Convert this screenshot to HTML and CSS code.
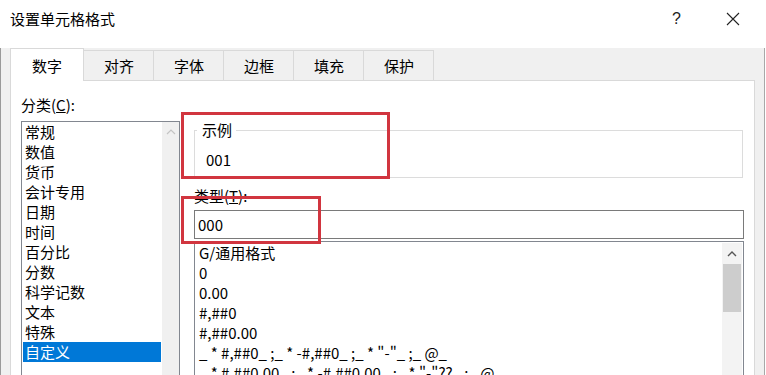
FILE: index.html
```html
<!DOCTYPE html>
<html lang="zh-CN">
<head>
    <meta charset="UTF-8">
    <meta name="viewport" content="width=device-width, initial-scale=1.0">
    <title>设置单元格格式</title>
    <link rel="stylesheet" href="styles.css">
</head>
<body>
    <div id="dialog">
        <div class="titlebar">
            <span class="title">设置单元格格式</span>
            <span class="help">?</span>
            <span class="close">
                <svg width="14" height="14" viewBox="0 0 14 14">
                    <path d="M1 1 L13 13 M13 1 L1 13" stroke="#222" stroke-width="1.1" fill="none"/>
                </svg>
            </span>
        </div>

        <div class="client">
            <div class="tabs">
                <div class="tab active">数字</div>
                <div class="tab">对齐</div>
                <div class="tab">字体</div>
                <div class="tab">边框</div>
                <div class="tab">填充</div>
                <div class="tab">保护</div>
            </div>

            <div class="panel">
                <div class="category">
                    <div class="label">分类(<u>C</u>):</div>
                    <div class="listbox categoryList">
                        <ul class="items">
                            <li>常规</li>
                            <li>数值</li>
                            <li>货币</li>
                            <li>会计专用</li>
                            <li>日期</li>
                            <li>时间</li>
                            <li>百分比</li>
                            <li>分数</li>
                            <li>科学记数</li>
                            <li>文本</li>
                            <li>特殊</li>
                            <li class="selected">自定义</li>
                        </ul>
                        <div class="vscroll">
                            <svg class="arrow" width="10" height="6" viewBox="0 0 10 6">
                                <path d="M1 5 L5 1 L9 5" stroke="#c4c4c4" stroke-width="1.2" fill="none"/>
                            </svg>
                        </div>
                    </div>
                </div>

                <div class="format">
                    <fieldset class="sample">
                        <legend>示例</legend>
                        <div class="sampleValue">001</div>
                    </fieldset>

                    <div class="label typeLabel">类型(<u>T</u>):</div>
                    <div class="typeInput">000</div>

                    <div class="listbox typeList">
                        <ul class="items">
                            <li>G/通用格式</li>
                            <li>0</li>
                            <li>0.00</li>
                            <li>#,##0</li>
                            <li>#,##0.00</li>
                            <li>_ * #,##0_ ;_ * -#,##0_ ;_ * "-"_ ;_ @_</li>
                            <li>_ * #,##0.00_ ;_ * -#,##0.00_ ;_ * "-"??_ ;_ @_</li>
                            <li>#,##0;-#,##0</li>
                        </ul>
                        <div class="vscroll">
                            <svg class="arrow" width="10" height="6" viewBox="0 0 10 6">
                                <path d="M1 5 L5 1 L9 5" stroke="#555" stroke-width="1.4" fill="none"/>
                            </svg>
                            <div class="thumb"></div>
                        </div>
                    </div>
                </div>
            </div>
        </div>

        <!-- red highlight boxes drawn over the dialog -->
        <div class="mark markSample"></div>
        <div class="mark markType"></div>
    </div>
</body>
</html>
```

FILE: styles.css
```css
body {
    margin: 0;
    background-color: white;
    font-family: "Noto Sans CJK SC", "Microsoft YaHei", sans-serif;
    font-size: 15px;
    color: #000;
}

#dialog {
    position: relative;
    width: 766px;
    height: 375px;
    overflow: hidden;
}

.titlebar {
    display: flex;
    align-items: center;
    height: 38px;
    padding-left: 10px;
    background-color: white;
}

.title {
    flex: 1;
    line-height: 40px;
}

.help {
    width: 14px;
    margin-right: 40px;
    font-family: "Liberation Sans", sans-serif;
    font-size: 16px;
    color: #222;
}

.close {
    display: flex;
    margin-right: 26px;
}

.client {
    height: 337px;
    margin-right: 1px;
    border-left: 1px solid #9a9a9a;
    border-right: 1px solid #a8a8a8;
    padding-left: 9px;
    background-color: #f0f0f0;
}

.tabs {
    display: flex;
    align-items: flex-end;
    height: 32px;
    margin-top: 10px;
}

.tab {
    position: relative;
    height: 30px;
    line-height: 30px;
    padding: 0 19px 0 20px;
    margin-left: -1px;
    border: 1px solid #d9d9d9;
    border-bottom: none;
    background-color: #f0f0f0;
    box-sizing: border-box;
}

.tab.active {
    z-index: 1;
    height: 33px;
    margin-left: 0;
    margin-bottom: -1px;
    padding: 2px 21px 0 21px;
    background-color: white;
}

.panel {
    display: flex;
    gap: 14px;
    width: 745px;
    height: 300px;
    box-sizing: border-box;
    padding: 14px 10px 0 10px;
    border: 1px solid #d9d9d9;
    background-color: white;
}

.label {
    line-height: 20px;
    white-space: nowrap;
}

.category {
    width: 159px;
}

.category .label {
    margin-bottom: 6px;
}

.listbox {
    display: flex;
    border: 1px solid #828790;
    background-color: white;
    height: 400px;
}

.items {
    flex: 1;
    list-style: none;
    margin: 0;
    padding: 0 1px;
}

.items li {
    line-height: 20px;
    padding-left: 2px;
    white-space: pre;
}

.items li.selected {
    background-color: #0078d7;
    color: white;
}

.vscroll {
    display: flex;
    flex-direction: column;
    align-items: center;
    width: 17px;
    background-color: #f0f0f0;
}

.vscroll .arrow {
    margin-top: 7px;
}

.format {
    width: 550px;
}

.sample {
    width: 549px;
    height: 58px;
    box-sizing: border-box;
    margin: 25px 0 0 0;
    padding: 10px 0 0 0;
    border: 1px solid #dcdcdc;
}

.sample legend {
    margin-left: 2px;
    padding: 0 4px 0 5px;
    line-height: 20px;
}

.sampleValue {
    padding-left: 11px;
    line-height: 20px;
}

.typeLabel {
    margin-top: 8px;
}

.typeInput {
    margin-top: 4px;
    height: 29px;
    box-sizing: border-box;
    padding-left: 3px;
    line-height: 27px;
    border: 1px solid #7a7a7a;
}

.typeList {
    margin-top: 2px;
}

.typeList .items {
    padding-top: 1px;
}

.typeList .items li {
    padding-left: 3px;
}

.typeList .vscroll {
    width: 20px;
    margin: 1px 1px 0 0;
    background-color: #f3f3f3;
}

.typeList .arrow {
    margin-top: 8px;
}

.thumb {
    width: 18px;
    height: 48px;
    margin-top: 7px;
    background-color: #cdcdcd;
}

.mark {
    position: absolute;
    border: 3px solid #d1353f;
}

.markSample {
    left: 181px;
    top: 112px;
    width: 203px;
    height: 61px;
}

.markType {
    left: 181px;
    top: 196px;
    width: 134px;
    height: 42px;
}
```
